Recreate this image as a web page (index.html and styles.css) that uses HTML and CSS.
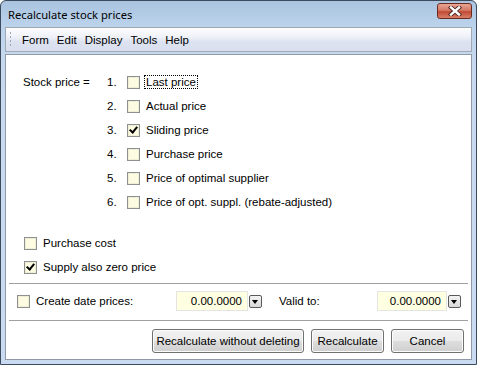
FILE: index.html
```html
<!DOCTYPE html>
<html lang="en">
<head>
    <meta charset="UTF-8">
    <title>Recalculate stock prices</title>
    <link rel="stylesheet" href="styles.css">
</head>
<body>
    <div class="window">
        <div class="titlebar">
            <span class="title">Recalculate stock prices</span>
            <span class="close-btn">
                <svg width="16" height="10" viewBox="0 0 16 10">
                    <path d="M4 1.5 L12 8.5 M12 1.5 L4 8.5" stroke="#4a2620" stroke-width="4.2" stroke-linecap="square"/>
                    <path d="M4 1.5 L12 8.5 M12 1.5 L4 8.5" stroke="#fff" stroke-width="2.4" stroke-linecap="square"/>
                </svg>
            </span>
        </div>

        <div class="menubar">
            <span class="grip"></span>
            <span class="menu-item">Form</span>
            <span class="menu-item">Edit</span>
            <span class="menu-item">Display</span>
            <span class="menu-item">Tools</span>
            <span class="menu-item">Help</span>
        </div>

        <div class="client">
            <!-- Price source options -->
            <div class="price-options">
                <div class="row">
                    <span class="row-caption">Stock price =</span>
                    <span class="num">1.</span>
                    <span class="checkbox"></span>
                    <span class="label focused">Last price</span>
                </div>
                <div class="row">
                    <span class="row-caption"></span>
                    <span class="num">2.</span>
                    <span class="checkbox"></span>
                    <span class="label">Actual price</span>
                </div>
                <div class="row">
                    <span class="row-caption"></span>
                    <span class="num">3.</span>
                    <span class="checkbox checked"></span>
                    <span class="label">Sliding price</span>
                </div>
                <div class="row">
                    <span class="row-caption"></span>
                    <span class="num">4.</span>
                    <span class="checkbox"></span>
                    <span class="label">Purchase price</span>
                </div>
                <div class="row">
                    <span class="row-caption"></span>
                    <span class="num">5.</span>
                    <span class="checkbox"></span>
                    <span class="label">Price of optimal supplier</span>
                </div>
                <div class="row">
                    <span class="row-caption"></span>
                    <span class="num">6.</span>
                    <span class="checkbox"></span>
                    <span class="label">Price of opt. suppl. (rebate-adjusted)</span>
                </div>
            </div>

            <div class="extra-options">
                <div class="row">
                    <span class="checkbox"></span>
                    <span class="label">Purchase cost</span>
                </div>
                <div class="row">
                    <span class="checkbox checked"></span>
                    <span class="label">Supply also zero price</span>
                </div>
            </div>

            <hr class="separator">

            <div class="date-row">
                <span class="checkbox"></span>
                <span class="label date-label">Create date prices:</span>
                <span class="date-field">0.00.0000</span>
                <span class="drop-btn"></span>
                <span class="label valid-label">Valid to:</span>
                <span class="date-field second">0.00.0000</span>
                <span class="drop-btn"></span>
            </div>

            <hr class="separator lower">

            <div class="buttons">
                <button class="btn wide">Recalculate without deleting</button>
                <button class="btn">Recalculate</button>
                <button class="btn">Cancel</button>
            </div>
        </div>
    </div>
</body>
</html>
```

FILE: styles.css
```css
html, body {
    margin: 0;
    padding: 0;
    background: #fff;
}
body {
    font-family: Tahoma, "Liberation Sans", sans-serif;
    font-size: 11.5px;
    color: #000;
}
.window {
    box-sizing: border-box;
    width: 477px;
    height: 365px;
    border: 1px solid #3c4a5c;
    border-radius: 6px 6px 0 0;
    background: linear-gradient(to bottom, #a9c3df 0px, #bcd3ec 26px, #c6d9ee 60px, #c8dbf0 100%);
    display: flex;
    flex-direction: column;
    padding: 0 4px 4px 4px;
}
.titlebar {
    height: 26px;
    display: flex;
    align-items: center;
    justify-content: space-between;
    padding-left: 3px;
}
.title {
    font-family: "Noto Sans", "Open Sans", sans-serif;
    font-size: 11.2px;
    color: #000;
    margin-top: 1px;
}
.close-btn {
    width: 33px;
    height: 14px;
    margin-top: -6px;
    margin-right: 0;
    border: 1px solid #6b2a20;
    border-radius: 3px;
    background: linear-gradient(to bottom, #e8a593 0%, #d47966 45%, #c24a33 55%, #d8806a 100%);
    display: flex;
    align-items: center;
    justify-content: center;
}
.menubar {
    height: 23px;
    border: 1px solid #a0a8b4;
    background: linear-gradient(to bottom, #fdfdfe 0%, #eef1f8 40%, #dce2f0 60%, #d9dfee 100%);
    display: flex;
    align-items: center;
    padding-left: 3px;
}
.grip {
    width: 3px;
    height: 17px;
    background-image: radial-gradient(circle, #9aa5b8 0.8px, transparent 1px);
    background-size: 3px 4px;
    margin-right: 6px;
}
.menu-item {
    padding: 0 4px;
}
.client {
    flex: 1;
    margin-top: 2px;
    background: #fff;
    border: 1px solid #8f9aa8;
    display: flex;
    flex-direction: column;
}
.price-options {
    padding-top: 15px;
}
.row {
    height: 24px;
    display: flex;
    align-items: center;
}
.row-caption {
    width: 84px;
    padding-left: 17px;
}
.num {
    width: 20px;
}
.checkbox {
    box-sizing: border-box;
    width: 13px;
    height: 13px;
    border: 1px solid #8e8f8f;
    background: #fdfbe2;
    box-shadow: inset 0 0 0 1px #f0eed4;
    position: relative;
    flex-shrink: 0;
}
.checkbox.checked::after {
    content: "";
    position: absolute;
    left: 3px;
    top: 0px;
    width: 3px;
    height: 6px;
    border: solid #000;
    border-width: 0 2px 2px 0;
    transform: rotate(40deg);
}
.label {
    margin-left: 6px;
    white-space: nowrap;
}
.focused {
    outline: 1px dotted #000;
    outline-offset: 0;
    margin-left: 5px;
    padding: 0 1px;
}
.extra-options {
    margin-top: 17px;
    padding-left: 18px;
}
.separator {
    margin: 4px 3px 0 3px;
    border: none;
    border-top: 1px solid #a0a0a0;
    height: 0;
}
.separator.lower {
    margin-top: 6px;
}
.date-row {
    height: 26px;
    display: flex;
    align-items: center;
    padding-left: 11px;
    margin-top: 4px;
}
.date-label {
    margin-left: 6px;
    width: 140px;
}
.date-field {
    box-sizing: border-box;
    width: 72px;
    height: 20px;
    background: #ffffe1;
    border: 1px solid #e4e4e4;
    text-align: right;
    padding-right: 5px;
    line-height: 18px;
}
.date-field.second {
    width: 70px;
}
.drop-btn {
    box-sizing: border-box;
    width: 13px;
    height: 13px;
    margin-left: 1px;
    border: 1px solid #5a5a5a;
    border-radius: 2px;
    background: linear-gradient(to bottom, #f4f4f4, #d8d8d8);
    position: relative;
}
.drop-btn::after {
    content: "";
    position: absolute;
    left: 2px;
    top: 4px;
    border-left: 3.5px solid transparent;
    border-right: 3.5px solid transparent;
    border-top: 4px solid #000;
}
.valid-label {
    margin-left: 17px;
    width: 98px;
}
.buttons {
    display: flex;
    justify-content: flex-end;
    gap: 7px;
    padding: 8px 7px 0 0;
}
.btn {
    box-sizing: border-box;
    height: 24px;
    width: 73px;
    font-family: inherit;
    font-size: 11.5px;
    color: #000;
    white-space: nowrap;
    border: 1px solid #707070;
    border-radius: 3px;
    background: linear-gradient(to bottom, #f2f2f2 0%, #ebebeb 48%, #dddddd 52%, #cfcfcf 100%);
    box-shadow: inset 0 0 0 1px #fcfcfc;
    padding: 0;
}
.btn.wide {
    width: 152px;
}
```
